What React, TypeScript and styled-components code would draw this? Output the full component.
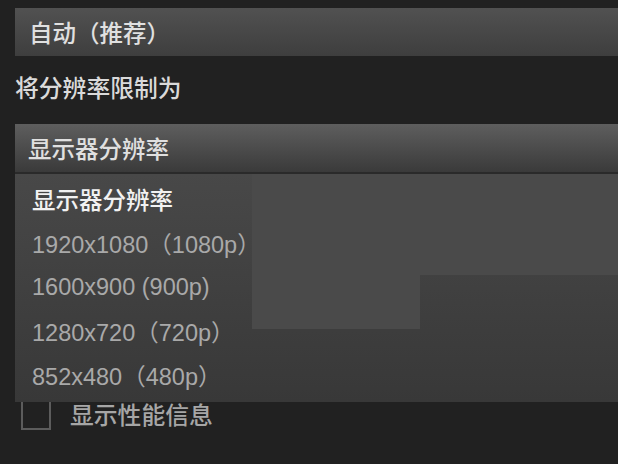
import React from "react";
import styled, { createGlobalStyle } from "styled-components";

const GlobalStyle = createGlobalStyle`
  html, body {
    margin: 0;
    padding: 0;
    background: #212121;
    overflow: hidden;
  }
  body {
    font-family: "Liberation Sans", "Noto Sans CJK SC", sans-serif;
    -webkit-font-smoothing: antialiased;
  }
`;

const Page = styled.div`
  width: 618px;
  height: 464px;
  padding: 8px 0 0 15px;
  box-sizing: border-box;
  display: flex;
  flex-direction: column;
  overflow: hidden;
`;

const Select = styled.div<{ $open?: boolean }>`
  width: 640px;
  height: 48px;
  box-sizing: border-box;
  padding-left: ${(p) => (p.$open ? 13 : 14)}px;
  display: flex;
  align-items: center;
  font-size: 23.5px;
  font-weight: 500;
  color: #e0e0e0;
  background: ${(p) =>
    p.$open
      ? "linear-gradient(#5e5e5e, #3a3a3a)"
      : "linear-gradient(#515151, #3e3e3e)"};
`;

const Label = styled.div`
  margin: 18px 0 0 0;
  height: 30px;
  line-height: 30px;
  font-size: 23.8px;
  font-weight: 500;
  color: #dadada;
`;

const DropdownWrap = styled.div`
  position: relative;
  margin-top: 20px;
`;

const List = styled.ul`
  position: absolute;
  left: 0;
  top: 50px;
  width: 640px;
  height: 228px;
  margin: 0;
  padding: 3px 0 0 0;
  box-sizing: border-box;
  list-style: none;
  z-index: 2;
  background-color: #404040;
  background-image:
    linear-gradient(#4a4a4a, #4a4a4a),
    linear-gradient(#4a4a4a, #4a4a4a),
    linear-gradient(#484848, #383838);
  background-repeat: no-repeat;
  background-size: 168px 155px, 235px 101px, 100% 100%;
  background-position: 237px 0, 405px 0, 0 0;
`;

const Divider = styled.div`
  position: absolute;
  left: 0;
  top: 48px;
  width: 640px;
  height: 2px;
  background: #2a2a2a;
  z-index: 2;
`;

const Item = styled.li<{ $current?: boolean }>`
  height: 44px;
  display: flex;
  align-items: center;
  padding-left: 17px;
  font-size: 23.5px;
  font-weight: ${(p) => (p.$current ? 500 : 400)};
  color: ${(p) => (p.$current ? "#f2f2f2" : "#a9a9a9")};
  white-space: nowrap;
`;

const CheckRow = styled.div`
  margin-top: 227px;
  display: flex;
  align-items: center;
  padding-left: 6px;
  gap: 19px;
`;

const Box = styled.div`
  width: 30px;
  height: 30px;
  box-sizing: border-box;
  border: 2px solid #5c5c5c;
`;

const CheckLabel = styled.span`
  font-size: 23.8px;
  font-weight: 500;
  color: #a6a6a6;
  margin-top: -3px;
`;

const options = [
  "显示器分辨率",
  "1920x1080（1080p）",
  "1600x900 (900p)",
  "1280x720（720p）",
  "852x480（480p）",
];

export default function App() {
  return (
    <>
      <GlobalStyle />
      <Page>
        <Select>自动（推荐）</Select>
        <Label>将分辨率限制为</Label>
        <DropdownWrap>
          <Select $open>显示器分辨率</Select>
          <Divider />
          <List>
            {options.map((o, i) => (
              <Item key={o} $current={i === 0}>
                {o}
              </Item>
            ))}
          </List>
        </DropdownWrap>
        <CheckRow>
          <Box />
          <CheckLabel>显示性能信息</CheckLabel>
        </CheckRow>
      </Page>
    </>
  );
}
